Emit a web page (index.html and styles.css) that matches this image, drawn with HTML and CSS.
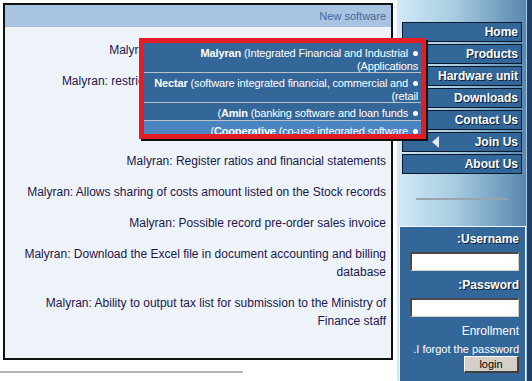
FILE: index.html
```html
<!DOCTYPE html>
<html>
<head>
    <link rel="stylesheet" href="styles.css">
</head>
<body>
    <div class="page">
        <div class="main">
            <div class="box">
                <div class="box-title">New software</div>
                <div class="box-body">
                    <p>Malyran: Managing warehouses and stock inventory</p>
                    <p>Malyran: restricting access for users by their permission level</p>
                    <p>Malyran: Manage cheques and bank accounts<br>of the company with full details</p>
                    <p>Malyran: Register ratios and financial statements</p>
                    <p>Malyran: Allows sharing of costs amount listed on the Stock records</p>
                    <p>Malyran: Possible record pre-order sales invoice</p>
                    <p>Malyran: Download the Excel file in document accounting and billing<br>database</p>
                    <p>Malyran: Ability to output tax list for submission to the Ministry of<br>Finance staff</p>
                    <p>Nectar: Take advantage of the features of the register</p>
                </div>
            </div>
            <div class="rule"></div>
        </div>

        <div class="side">
            <div class="nav">
                <a class="nav-btn" href="#">Home</a>
                <a class="nav-btn" href="#">Products</a>
                <a class="nav-btn" href="#">Hardware unit</a>
                <a class="nav-btn" href="#">Downloads</a>
                <a class="nav-btn" href="#">Contact Us</a>
                <a class="nav-btn" href="#"><span class="arrow"></span>Join Us</a>
                <a class="nav-btn" href="#">About Us</a>
            </div>
            <div class="side-rule"></div>
            <div class="login">
                <div class="login-label">:Username</div>
                <input class="login-input" type="text">
                <div class="login-label">:Password</div>
                <input class="login-input" type="password">
                <div class="enroll">Enrollment</div>
                <div class="forgot">.I forgot the password</div>
                <button class="login-btn">login</button>
            </div>
        </div>

        <div class="submenu">
            <div class="sub-item"><b>Malyran</b> (Integrated Financial and Industrial<span class="dot"></span><br>(Applications</div>
            <div class="sub-item"><b>Nectar</b> (software integrated financial, commercial and<span class="dot"></span><br>(retail</div>
            <div class="sub-item">(<b>Amin</b> (banking software and loan funds<span class="dot"></span></div>
            <div class="sub-item active">(<b>Cooperative</b> (co-use integrated software<span class="dot"></span></div>
        </div>
    </div>
</body>
</html>
```

FILE: styles.css
```css
body {
    margin: 0;
    background: #fff;
    font-family: 'Liberation Sans', Arial, sans-serif;
}

.page {
    position: relative;
    display: flex;
    width: 532px;
    height: 381px;
    overflow: hidden;
}

.main {
    width: 397px;
}

.box {
    box-sizing: border-box;
    width: 390px;
    height: 357px;
    margin: 3px 0 0 3px;
    border: 2px solid #111;
    background: #eef3f9;
    padding-bottom: 11px;
}

.box-title {
    height: 22px;
    line-height: 22px;
    background: #a9c4e1;
    color: #44699d;
    font-size: 11px;
    text-align: right;
    padding-right: 5px;
}

.box-body {
    height: 320px;
    overflow: hidden;
    box-sizing: border-box;
    padding: 14px 5px 0 5px;
    text-align: right;
    color: #22174e;
    font-size: 12px;
    line-height: 18px;
}

.box-body p {
    margin: 0 0 13px;
}

.rule {
    width: 243px;
    height: 2px;
    margin-top: 11px;
    background: #b3b3b3;
}

.side {
    width: 130px;
    height: 381px;
    border-right: 5px solid #213f67;
    background: linear-gradient(to right, #d3e9f5 0%, #a6cbe1 45%, #5786ae 100%);
    box-shadow: inset -1px 0 0 #a9c6dc;
}

.nav {
    display: flex;
    flex-direction: column;
    gap: 2px;
    padding: 22px 5px 0;
}

.nav-btn {
    box-sizing: border-box;
    display: block;
    height: 20px;
    line-height: 19px;
    border: 1px solid #0c1a2b;
    background: #336699;
    color: #fff;
    font-size: 12px;
    font-weight: bold;
    text-align: right;
    padding-right: 3px;
    text-decoration: none;
    text-shadow: 1px 1px 0 #0b1c33;
}

.arrow {
    display: inline-block;
    width: 0;
    height: 0;
    border-top: 6px solid transparent;
    border-bottom: 6px solid transparent;
    border-right: 7px solid #e2e8ef;
    vertical-align: -2px;
    margin-right: 36px;
}

.side-rule {
    width: 92px;
    height: 2px;
    margin: 24px 0 0 19px;
    background: #9aa4ae;
}

.login {
    box-sizing: border-box;
    height: 160px;
    margin: 26px 1px 0 2px;
    border: 1px solid #f2f6fa;
    border-bottom: none;
    background: #336699;
    padding: 4px 6px 0 0;
    display: flex;
    flex-direction: column;
    align-items: flex-end;
    color: #fff;
}

.login-label {
    font-size: 12px;
    font-weight: bold;
    line-height: 16px;
    text-shadow: 1px 1px 0 #0b1c33;
}

.login-label + .login-input {
    margin-top: 5px;
}

.login-input + .login-label {
    margin-top: 6px;
}

.login-input {
    box-sizing: border-box;
    width: 109px;
    height: 19px;
    margin: 0;
    padding: 0 2px;
    background: #fff;
    border-style: solid;
    border-width: 2px 1px 1px 2px;
    border-color: #4a4a4a #d4d0c8 #d4d0c8 #4a4a4a;
}

.enroll {
    margin-top: 6px;
    font-size: 12px;
    line-height: 16px;
}

.forgot {
    margin-top: 3px;
    font-size: 11px;
    line-height: 14px;
}

.login-btn {
    box-sizing: border-box;
    width: 55px;
    height: 17px;
    padding: 0;
    background: #d4d0c8;
    border-style: solid;
    border-width: 1px 2px 2px 1px;
    border-color: #fff #404040 #404040 #fff;
    font-family: 'Liberation Sans', Arial, sans-serif;
    font-size: 11px;
    line-height: 13px;
    color: #000;
}

.submenu {
    position: absolute;
    left: 139px;
    top: 38px;
    box-sizing: border-box;
    width: 287px;
    height: 101px;
    border: 5px solid #e41c24;
    background: #336699;
    overflow: hidden;
    box-shadow: 2px 2px 0 #111;
}

.sub-item {
    padding: 4px 3px 0;
    border-bottom: 1px solid #bcc2c9;
    color: #fff;
    font-size: 11px;
    line-height: 12.5px;
    letter-spacing: -0.15px;
    text-align: right;
    white-space: nowrap;
}

.sub-item.active {
    background: #4a85c2;
    border-bottom: none;
}

.dot {
    display: inline-block;
    width: 5px;
    height: 5px;
    border-radius: 50%;
    background: #fff;
    margin-left: 5px;
    vertical-align: 1px;
}
```
